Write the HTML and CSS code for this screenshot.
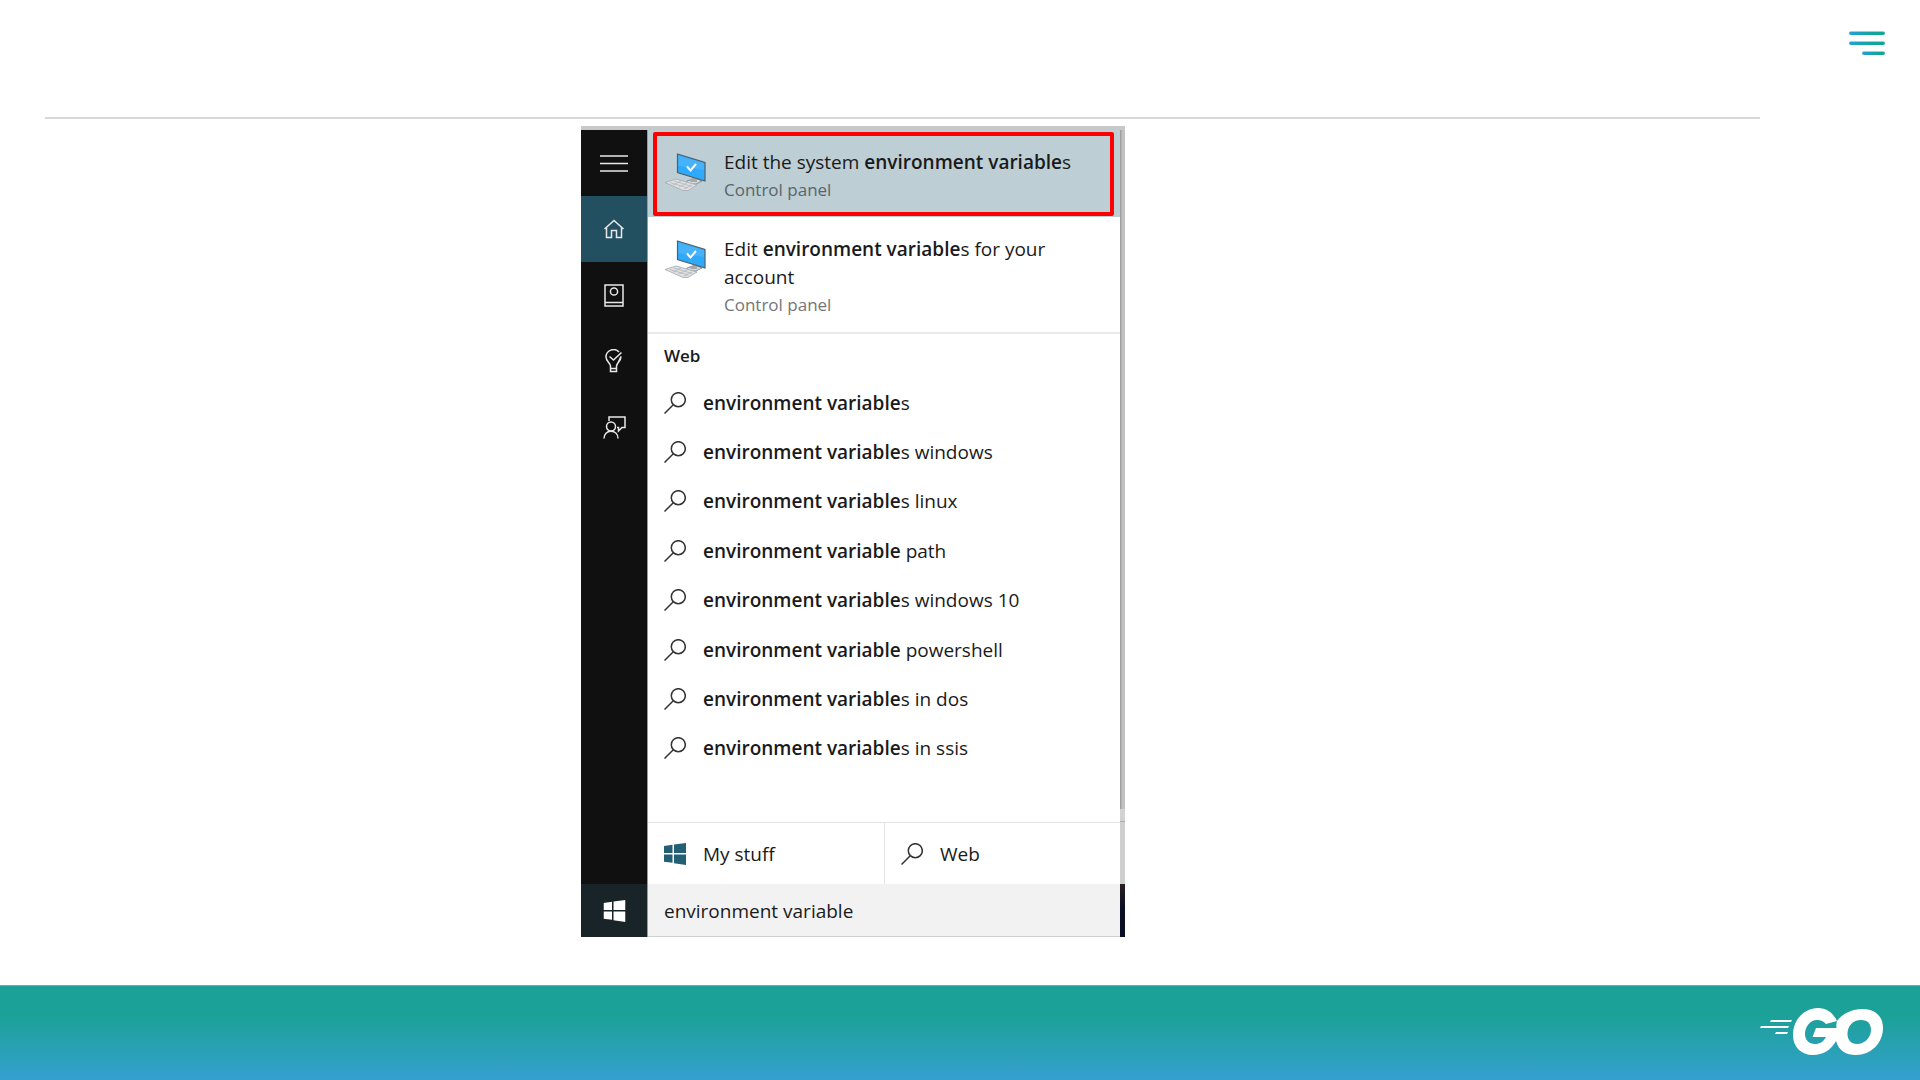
FILE: index.html
```html
<!DOCTYPE html>
<html lang="en">
<head>
<meta charset="utf-8">
<meta name="viewport" content="width=device-width, initial-scale=1">
<title>Environment variables</title>
<link rel="stylesheet" href="styles.css">
</head>
<body>
<svg class="defs" width="0" height="0" aria-hidden="true">
  <symbol id="search" viewBox="0 0 22 22"><circle cx="14.300" cy="7.700" r="7" /><path d="M9.300 12.700 0.500 21.500" /></symbol>
  <symbol id="windows" viewBox="0 0 22 22"><path d="M0 3 8.500 1.800V10H0ZM10 1.600 22 0V10H10ZM0 11.500H8.500V19.800L0 18.700ZM10 11.500H22V22L10 20.200Z" /></symbol>
  <symbol id="computer" viewBox="0 0 42 40">
    <path d="M23 28 31 25 38 28 32 31 22 31Z" fill="#d5d9dc" stroke="#777f84" stroke-width=".8" />
    <path d="M25 27 33 24V29L27 29Z" fill="#a3abb0" />
    <path d="M13.500 1 41 9.500V28L13.500 19.500Z" fill="#2fa9fa" stroke="#50606a" stroke-width="1.200" />
    <path d="M14.500 2.500 40 10.300V17L14.500 13Z" fill="#45b2fa" />
    <path d="M23 13.500 26.500 17.500 32 11" fill="none" stroke="#fff" stroke-width="2" />
    <path d="M1 29.500 12 26 33 32 24 37.500 19 37.500Z" fill="#dde0e2" stroke="#a5aaad" stroke-width=".8" />
    <path d="M6 29.500 24 35M10 28 28 33.500M9 32 17 28M15 34 23 30M20 36 28 32" fill="none" stroke="#b4b8ba" stroke-width=".8" />
  </symbol>
</svg>

<header class="top">
  <button class="menu" aria-label="Menu"><span class="bar"></span><span class="bar"></span><span class="bar short"></span></button>
</header>

<main class="stage">
  <section class="panel">
    <nav class="rail" aria-label="Search sections">
      <button class="rail-btn" aria-label="Expand"><svg width="28" height="18" viewBox="0 0 28 18"><path d="M0 2H28M0 9.500H28M0 17H28" /></svg></button>
      <button class="rail-btn active" aria-label="Home"><svg width="20" height="20" viewBox="0 0 20 20"><path d="M0.500 10 10 1.500 19.500 10M2.500 8.500V18.500H7.500V11.500H12.500V18.500H17.500V8.500" /></svg></button>
      <button class="rail-btn" aria-label="Notebook"><svg width="20" height="23" viewBox="0 0 20 23"><path d="M1 1H19V22H1ZM1 18.500H19" /><circle cx="10" cy="7.500" r="3.600" /></svg></button>
      <button class="rail-btn" aria-label="Tips"><svg width="18" height="24" viewBox="0 0 18 24"><path d="M5.500 17C5.500 14 1 12.500 1 8A7.500 7.500 0 0 1 14 3M16 7.500C16 12.500 11.500 14 11.500 17ZM5.500 17V22.500H11.500V17M5.500 19.500H11.500M4.500 7.500 8.500 11 16.500 3.500" /></svg></button>
      <button class="rail-btn" aria-label="Feedback"><svg width="23" height="23" viewBox="0 0 23 23"><circle cx="8" cy="10.500" r="4.500" /><path d="M1 22.500C1 18 4 15.200 8 15.200S15 18 15 22.500M6 5V1H22V11.500H19L15.500 15V11.500H14" /></svg></button>
      <button class="start" aria-label="Start"><svg width="23" height="22" viewBox="0 0 22 22"><use href="#windows" /></svg></button>
    </nav>
    <div class="results">
      <div class="selected">
        <a class="result" href="#system">
          <svg class="pc" width="42" height="40"><use href="#computer" /></svg>
          <span class="label"><span>Edit the system <b>environment variable</b>s</span><small>Control panel</small></span>
        </a>
      </div>
      <a class="result second" href="#account">
        <svg class="pc" width="42" height="40"><use href="#computer" /></svg>
        <span class="label"><span>Edit <b>environment variable</b>s for your<br>account</span><small>Control panel</small></span>
      </a>
      <h2 class="heading">Web</h2>
      <ul class="suggestions">
        <li><a href="#s1"><svg class="glass"><use href="#search" /></svg><span><b>environment variable</b>s</span></a></li>
        <li><a href="#s2"><svg class="glass"><use href="#search" /></svg><span><b>environment variable</b>s windows</span></a></li>
        <li><a href="#s3"><svg class="glass"><use href="#search" /></svg><span><b>environment variable</b>s linux</span></a></li>
        <li><a href="#s4"><svg class="glass"><use href="#search" /></svg><span><b>environment variable</b> path</span></a></li>
        <li><a href="#s5"><svg class="glass"><use href="#search" /></svg><span><b>environment variable</b>s windows 10</span></a></li>
        <li><a href="#s6"><svg class="glass"><use href="#search" /></svg><span><b>environment variable</b> powershell</span></a></li>
        <li><a href="#s7"><svg class="glass"><use href="#search" /></svg><span><b>environment variable</b>s in dos</span></a></li>
        <li><a href="#s8"><svg class="glass"><use href="#search" /></svg><span><b>environment variable</b>s in ssis</span></a></li>
      </ul>
      <div class="scopes">
        <button class="scope"><svg class="logo"><use href="#windows" /></svg><span>My stuff</span></button>
        <button class="scope"><svg class="glass"><use href="#search" /></svg><span>Web</span></button>
      </div>
      <input class="query" type="text" aria-label="Search" value="environment variable">
    </div>
    <div class="edge"><span class="edge-mid"></span><span class="edge-low"></span><span class="edge-dark"></span></div>
  </section>
</main>

<footer class="bottom">
  <svg class="go" width="124" height="50" viewBox="0 0 124 50" role="img" aria-label="Go">
    <path fill="#fff" d="M11 12H32L31 14H10ZM1 18H29L28 20H0ZM16 24H28L27 26H15Z" />
    <path fill="#fff" fill-rule="evenodd" d="M77 13C73 5 67 0 58 0C45 0 33 11 33 27C33 39 41 47 53 47C63 47 71 42 76 33C79 43 86 47 96 47C111 47 123 35 123 20C123 8 115 1 102 1C91 1 81 7 77 13ZM77 13 66 16C63 13 61 12 57 12C50 12 45 19 45 26C45 32 49 36 55 36C60 36 63 34 66 29H52.500L56 20H76.500C76 17 76.500 15 77 13ZM101 12C93 12 87.500 18 87.500 26C87.500 32 91 36 97 36C105 36 111 29 111 22C111 16 108 12 101 12Z" />
  </svg>
</footer>
</body>
</html>
```
FILE: styles.css
```css
* { box-sizing: border-box; }

body {
  margin: 0;
  min-height: 100vh;
  display: flex;
  flex-direction: column;
  background: #fff;
  color: #1a1a1a;
  font: 19px/28px "Open Sans", "Noto Sans", sans-serif;
}

button {
  border: 0;
  padding: 0;
  background: none;
  color: inherit;
  font: inherit;
}

a { color: inherit; text-decoration: none; }
b { font-weight: 600; }
svg { flex: none; display: block; }
.defs { position: absolute; }

.top {
  height: 119px;
  margin: 0 160px 0 45px;
  border-bottom: 2px solid #d8d8d8;
  display: flex;
  justify-content: flex-end;
  align-items: flex-start;
}

.menu {
  display: flex;
  flex-direction: column;
  align-items: flex-end;
  gap: 6px;
  margin: 31px -125px 0 0;
}

.bar {
  width: 36px;
  height: 4px;
  border-radius: 2px;
  background: linear-gradient(90deg, #26a0d8, #10a697 70%);
  border-top: 1px solid #a9cccd;
}
.bar.short { width: 23px; }

.stage {
  flex: 1;
  display: flex;
  justify-content: center;
  align-items: flex-start;
  padding: 7px 214px 48px 0;
}

.panel {
  width: 544px;
  display: grid;
  grid-template-columns: 67px 1fr 5px;
  border-top: 4px solid #c6c8c9;
}

.rail {
  display: flex;
  flex-direction: column;
  background: #101010;
  border-right: 1px solid #999;
}

.rail-btn {
  height: 66px;
  display: grid;
  place-items: center;
}
.rail-btn svg { fill: none; stroke: #e8e8e8; stroke-width: 1.5px; }
.rail-btn.active { background: #225061; }

.start {
  height: 53px;
  margin-top: auto;
  display: grid;
  place-items: center;
  background: #182427;
  fill: #fff;
}

.results { display: flex; flex-direction: column; }

.result {
  display: flex;
  gap: 18px;
  padding: 18px 16px 13px;
}
.result .label { display: flex; flex-direction: column; }
.result small { font-size: 17px; color: #757575; }
.pc { margin-top: 5px; }

.selected {
  padding: 2px 6px 1px 5px;
  background: #bdced5;
}
.selected .result {
  padding: 12px 7px 8px;
  border: 4px solid #f00;
  border-radius: 2px;
}
.selected small { color: #59656a; }
.second { border-bottom: 2px solid #eaeaea; }

.heading {
  margin: 0;
  padding: 8px 16px;
  font-size: 17px;
  line-height: 28px;
  font-weight: 600;
}

.suggestions {
  list-style: none;
  margin: 0 0 49px;
  padding: 0;
  min-height: 395px;
  display: grid;
  grid-auto-rows: 1fr;
}
.suggestions a {
  height: 100%;
  display: flex;
  align-items: center;
  gap: 17px;
  padding-left: 16px;
}

.glass, .logo { width: 22px; height: 22px; }
.glass { fill: none; stroke: #333; stroke-width: 1.5px; }
.logo { fill: #235f75; }

.scopes {
  display: grid;
  grid-template-columns: 1fr 1fr;
  border-top: 1px solid #e3e3e3;
}
.scope {
  height: 61px;
  display: flex;
  align-items: center;
  gap: 17px;
  padding-left: 16px;
}
.scope + .scope { border-left: 1px solid #e3e3e3; }

.query {
  width: 100%;
  height: 53px;
  border: 0;
  border-bottom: 1px solid #d0d0d0;
  padding: 2px 16px 0;
  background: #f2f2f2;
  color: inherit;
  font: inherit;
}

.edge {
  display: flex;
  flex-direction: column;
  justify-content: flex-end;
  background: linear-gradient(90deg, #a0a0a0 1px, #c2c2c2 2px);
}
.edge-mid { height: 12px; background: #d2d2d2; }
.edge-low { height: 63px; background: #cfcfcf; border-top: 1px solid #aaa; }
.edge-dark { height: 53px; background: linear-gradient(#2a2020, #0b0f24 45%); }

.bottom {
  height: 95px;
  display: flex;
  justify-content: flex-end;
  align-items: flex-start;
  padding: 22px 36px 0 0;
  border-top: 1px solid #74aaa5;
  background: linear-gradient(#1ba197, #1ba197 30%, #35a0cf);
}
```
